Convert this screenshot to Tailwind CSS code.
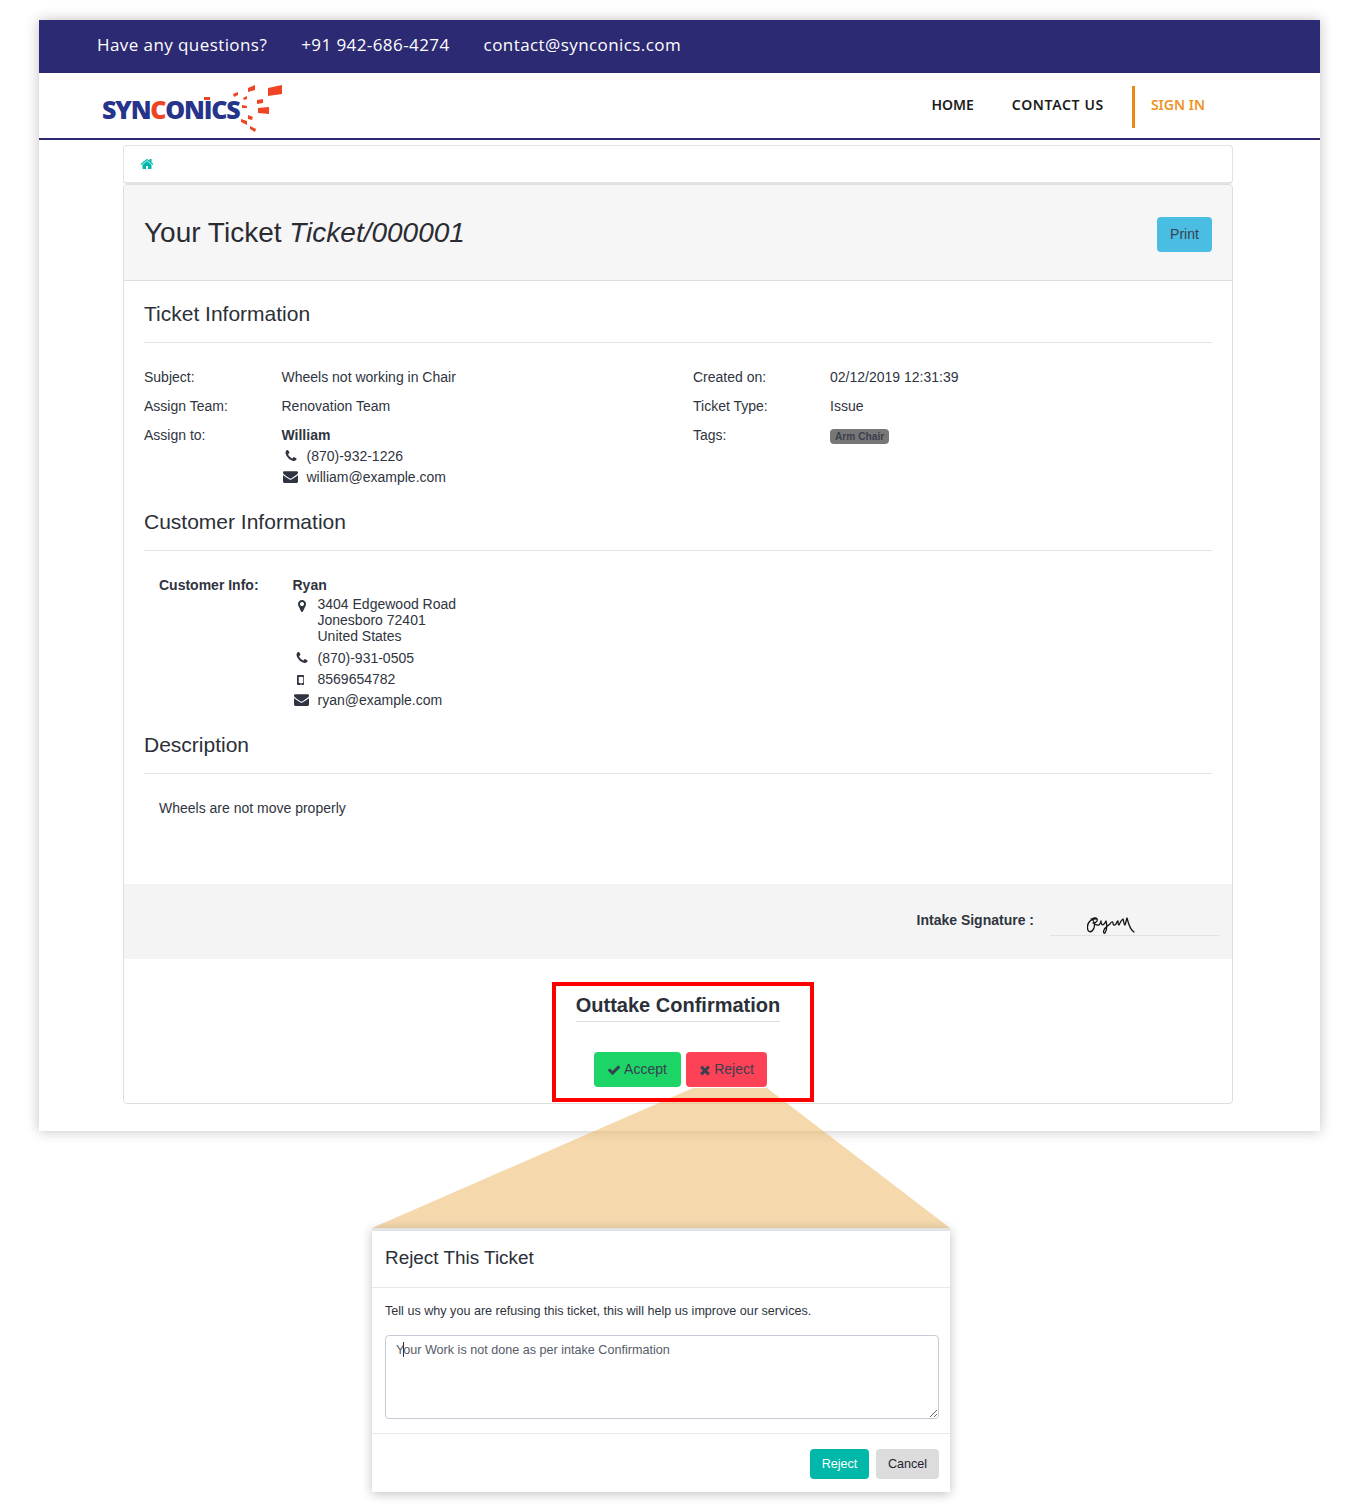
<!DOCTYPE html>
<html lang="en">
<head>
<meta charset="UTF-8">
<title>Ticket</title>
<script src="https://cdn.jsdelivr.net/npm/@tailwindcss/browser@4"></script>
</head>
<body class="bg-white">
<div class="relative w-[1368px] h-[1512px] overflow-hidden font-['Liberation_Sans',sans-serif] text-[14px] text-[#2f3440]">

  <!-- page window -->
  <div class="absolute left-[39px] top-[20px] w-[1281px] h-[1111px] bg-white shadow-[0_0_12px_rgba(60,40,40,0.3)]">
    <div class="h-[53px] bg-[#2c2a72] flex items-center pl-[58px] pb-[4px] gap-[34px] text-white text-[17px] font-['Open_Sans',sans-serif] tracking-[0.42px]">
      <span>Have any questions?</span>
      <span>+91 942-686-4274</span>
      <span>contact@synconics.com</span>
    </div>
    <div class="h-[67px] border-b-2 border-[#2c2a72] flex items-center justify-between">
      <div class="relative ml-[63px] w-[185px] h-[65px]">
        <span class="absolute left-0 top-[16px] text-[25px] leading-[40px] font-extrabold font-['Open_Sans',sans-serif] tracking-[-1.2px] text-[#27348b]">SYN<span class="text-[#ef4423]">C</span>ONICS</span>
        <svg class="absolute left-0 top-0" width="185" height="65" viewBox="0 0 185 65" fill="#ef4423">
          <polygon points="166,15 180,12 180,21 166,23"/>
          <polygon points="146,15 153,12 153,17 146,19"/>
          <polygon points="131,21 136,19 136,22 132,24"/>
          <polygon points="141,25 145,23 145,26 142,27"/>
          <polygon points="155,27 161,26 161,30 155,31"/>
          <polygon points="140,32 145,33 145,35 140,35"/>
          <polygon points="156,35 167,34 167,41 156,40"/>
          <polygon points="146,42 151,44 150,47 146,46"/>
          <polygon points="139,46 145,48 145,52 139,49"/>
          <polygon points="148,53 154,56 153,59 148,56"/>
          <rect x="102" y="24" width="6" height="3"/>
        </svg>
      </div>
      <nav class="flex items-center mr-[115px] font-['Noto_Sans',sans-serif] font-semibold text-[14px] text-[#1c1c1c]">
        <span class="mb-[2px]">HOME</span>
        <span class="ml-[38px] mb-[2px] tracking-[0.65px]">CONTACT US</span>
        <span class="ml-[28px] mt-[2px] h-[42px] border-l-[3px] border-[#e98a15] pl-[16px] leading-[38px] text-[#ee9426]">SIGN IN</span>
      </nav>
    </div>

    <div class="ml-[84px] mr-[87px] mt-[5px]">
      <div class="h-[39px] border border-[#e2e2e2] border-b-2 rounded-[4px] flex items-center pl-[16px] pb-[1px]">
        <svg class="text-[#00b8a9]" width="14" height="14" viewBox="0 0 1792 1792" fill="currentColor"><path d="M1472 992v480q0 26-19 45t-45 19h-384v-384h-256v384h-384q-26 0-45-19t-19-45v-480q0-1 .5-3t.5-3l575-474 575 474q1 2 1 6zm223-69l-62 74q-8 9-21 11h-3q-13 0-21-7l-692-577-692 577q-12 8-24 7-13-2-21-11l-62-74q-8-10-7-23.5t11-21.5l719-599q32-26 76-26t76 26l244 204v-195q0-14 9-23t23-9h192q14 0 23 9t9 23v408l219 182q10 8 11 21.5t-7 23.5z"/></svg>
      </div>

      <div class="h-[920px] border border-[#dedede] rounded-[4px] flex flex-col">
        <div class="h-[96px] shrink-0 bg-[#f6f6f6] border-b border-[#dedede] flex items-center justify-between px-[20px] rounded-t-[4px]">
          <h1 class="text-[28px] leading-[32px] text-[#2b2b33]">Your Ticket <em>Ticket/000001</em></h1>
          <button class="w-[55px] h-[35px] bg-[#4abde2] rounded-[4px] text-[14px] text-[#39404f] mt-[4px]">Print</button>
        </div>

        <div class="px-[20px]">
          <h2 class="h-[62px] border-b border-[#e4e4e4] text-[21px] leading-[66px] text-[#2b2f38]">Ticket Information</h2>
          <div class="flex mt-[20px] leading-[29px]">
            <div class="w-[549px] flex">
              <div class="w-[137.5px] shrink-0">
                <p>Subject:</p><p>Assign Team:</p><p>Assign to:</p>
              </div>
              <div>
                <p>Wheels not working in Chair</p>
                <p>Renovation Team</p>
                <p class="font-bold h-[25px]">William</p>
                <p class="flex items-center h-[21px] leading-[21px]">
                  <span class="w-[25px] flex justify-center pr-[7px] mb-[1px]"><svg width="14" height="14" viewBox="0 0 1792 1792" fill="currentColor"><path d="M1600 1240q0 27-10 70.5t-21 68.5q-21 50-122 106-94 51-186 51-27 0-53-3.5t-57.5-12.5-47-14.5-55.5-20.5-49-18q-98-35-175-83-127-79-264-216t-216-264q-48-77-83-175-3-9-18-49t-20.5-55.5-14.5-47-12.5-57.5-3.5-53q0-92 51-186 56-101 106-122 25-11 68.5-21t70.5-10q14 0 21 3 18 6 53 76 11 19 30 54t35 63.5 31 53.5q3 4 17.5 25t21.5 35.5 7 28.5q0 20-28.5 50t-62 55-62 53-28.5 46q0 9 5 22.5t8.5 20.5 14 24 11.5 19q76 137 174 235t235 174q2 1 19 11.5t24 14 20.5 8.5 22.5 5q18 0 46-28.5t53-62 55-62 50-28.5q14 0 28.5 7t35.5 21.5 25 17.5q25 15 53.5 31t63.5 35 54 30q70 35 76 53 3 7 3 21z"/></svg></span>(870)-932-1226</p>
                <p class="flex items-center h-[21px] leading-[21px]">
                  <span class="w-[25px] flex justify-center pr-[8px] mb-[2px]"><svg width="15" height="15" viewBox="0 0 1792 1792" fill="currentColor"><path d="M1792 710v794q0 66-47 113t-113 47h-1472q-66 0-113-47t-47-113v-794q44 49 101 87 362 246 497 345 57 42 92.5 65.5t94.5 48 110 24.5h2q51 0 110-24.5t94.5-48 92.5-65.5q170-123 498-345 57-39 100-87zm0-294q0 79-49 151t-122 123q-376 261-468 325-10 7-42.5 30.5t-54 38-52 32.5-57.5 27-50 9h-2q-23 0-50-9t-57.5-27-52-32.5-54-38-42.5-30.5q-91-64-262-182.5t-205-142.5q-62-42-117-115.5t-55-136.5q0-78 41.5-130t118.5-52h1472q65 0 112.5 47t47.5 113z"/></svg></span>william@example.com</p>
              </div>
            </div>
            <div class="flex">
              <div class="w-[137px] shrink-0">
                <p>Created on:</p><p>Ticket Type:</p><p>Tags:</p>
              </div>
              <div>
                <p>02/12/2019 12:31:39</p>
                <p>Issue</p>
                <p class="h-[29px] flex items-center"><span class="h-[15px] mt-[1px] px-[5px] rounded-[4px] bg-[#777777] text-[10.2px] leading-[15px] font-bold text-[#3a3f4c]">Arm Chair</span></p>
              </div>
            </div>
          </div>

          <h2 class="h-[62px] mt-[1px] border-b border-[#e4e4e4] text-[21px] leading-[66px] text-[#2b2f38]">Customer Information</h2>
          <div class="flex pl-[15px] mt-[24px]">
            <div class="w-[133.5px] font-bold leading-[21px]">Customer Info:</div>
            <div class="leading-[21px]">
              <p class="font-bold h-[21px]">Ryan</p>
              <div class="flex">
                <span class="w-[25px] pt-[3px] flex justify-center items-start pr-[7px]"><svg width="14" height="14" viewBox="0 0 1792 1792" fill="currentColor"><path d="M1152 640q0-106-75-181t-181-75-181 75-75 181 75 181 181 75 181-75 75-181zm256 0q0 109-33 179l-364 774q-16 33-47.5 52t-67.5 19-67.5-19-46.5-52l-365-774q-33-70-33-179 0-212 150-362t362-150 362 150 150 362z"/></svg></span>
                <p class="leading-[16px] mb-[4px]">3404 Edgewood Road<br>Jonesboro 72401<br>United States</p>
              </div>
              <p class="flex items-center h-[21px]">
                <span class="w-[25px] flex justify-center pr-[7px] mb-[1px]"><svg width="14" height="14" viewBox="0 0 1792 1792" fill="currentColor"><path d="M1600 1240q0 27-10 70.5t-21 68.5q-21 50-122 106-94 51-186 51-27 0-53-3.5t-57.5-12.5-47-14.5-55.5-20.5-49-18q-98-35-175-83-127-79-264-216t-216-264q-48-77-83-175-3-9-18-49t-20.5-55.5-14.5-47-12.5-57.5-3.5-53q0-92 51-186 56-101 106-122 25-11 68.5-21t70.5-10q14 0 21 3 18 6 53 76 11 19 30 54t35 63.5 31 53.5q3 4 17.5 25t21.5 35.5 7 28.5q0 20-28.5 50t-62 55-62 53-28.5 46q0 9 5 22.5t8.5 20.5 14 24 11.5 19q76 137 174 235t235 174q2 1 19 11.5t24 14 20.5 8.5 22.5 5q18 0 46-28.5t53-62 55-62 50-28.5q14 0 28.5 7t35.5 21.5 25 17.5q25 15 53.5 31t63.5 35 54 30q70 35 76 53 3 7 3 21z"/></svg></span>(870)-931-0505</p>
              <p class="flex items-center h-[21px]">
                <span class="w-[25px] flex justify-center pr-[8px]"><svg width="14" height="14" viewBox="0 0 1792 1792" fill="currentColor"><path d="M976 1408q0-33-23.5-56.5t-56.5-23.5-56.5 23.5-23.5 56.5 23.5 56.5 56.5 23.5 56.5-23.5 23.5-56.5zm208-160v-704q0-13-9.5-22.5t-22.5-9.5h-512q-13 0-22.5 9.5t-9.5 22.5v704q0 13 9.5 22.5t22.5 9.5h512q13 0 22.5-9.5t9.5-22.5zm-192-848q0-16-16-16h-160q-16 0-16 16t16 16h160q16 0 16-16zm288-16v1024q0 52-38 90t-90 38h-640q-52 0-90-38t-38-90v-1024q0-52 38-90t90-38h640q52 0 90 38t38 90z"/></svg></span>8569654782</p>
              <p class="flex items-center h-[21px]">
                <span class="w-[25px] flex justify-center pr-[8px] mb-[2px]"><svg width="15" height="15" viewBox="0 0 1792 1792" fill="currentColor"><path d="M1792 710v794q0 66-47 113t-113 47h-1472q-66 0-113-47t-47-113v-794q44 49 101 87 362 246 497 345 57 42 92.5 65.5t94.5 48 110 24.5h2q51 0 110-24.5t94.5-48 92.5-65.5q170-123 498-345 57-39 100-87zm0-294q0 79-49 151t-122 123q-376 261-468 325-10 7-42.5 30.5t-54 38-52 32.5-57.5 27-50 9h-2q-23 0-50-9t-57.5-27-52-32.5-54-38-42.5-30.5q-91-64-262-182.5t-205-142.5q-62-42-117-115.5t-55-136.5q0-78 41.5-130t118.5-52h1472q65 0 112.5 47t47.5 113z"/></svg></span>ryan@example.com</p>
            </div>
          </div>

          <h2 class="h-[62px] mt-[1px] border-b border-[#e4e4e4] text-[21px] leading-[66px] text-[#2b2f38]">Description</h2>
          <p class="pl-[15px] mt-[24px] leading-[21px] h-[86px]">Wheels are not move properly</p>
        </div>

        <div class="h-[75px] shrink-0 bg-[#f4f4f4] flex items-start justify-end pr-[13px]">
          <span class="font-bold mt-[26px] mr-[16px] leading-[20px]">Intake Signature :</span>
          <div class="w-[169px] h-[52px] border-b border-[#e2e2e2] flex justify-center">
            <svg class="mt-[33px] ml-[-47px]" width="48" height="18" viewBox="0 0 48 18" fill="none" stroke="#111111" stroke-width="1.3" stroke-linecap="round" stroke-linejoin="round"><path d="M10 2C4 1 0 6 .5 11 1 16 5 16 7 11 8 7 7 3 4 2M5 2C8 0 11 1 10 4 9 6 7 6 6 6 8 7 10 9 12 8 14 6 14 4 14 4 14 7 15 9 17 7 18 6 19 4 19 4 20 8 20 13 18 16 17 17 16 15 17 13 18 10 21 9 23 7 24 5 26 4 26 6 26 8 27 9 29 7 30 5 30 4 31 4 31 6 31 8 32 8 33 6 34 3 36 2 37 5 37 8 38 8 39 6 39 3 40 1 41 5 43 13 47 15"/></svg>
          </div>
        </div>

        <div class="flex flex-col items-center">
          <h3 class="mt-[31px] text-[20px] leading-[30px] font-bold h-[32px] border-b border-[#dcdcdc] text-[#2b2f38]">Outtake Confirmation</h3>
          <div class="mt-[30px] flex gap-[5px] ml-[4px]">
            <button class="h-[35px] w-[87px] rounded-[4px] bg-[#1cd566] flex items-center justify-center gap-[3px] text-[#39404f]"><svg width="14" height="14" viewBox="0 0 1792 1792" fill="currentColor"><path d="M1671 566q0 40-28 68l-724 724-136 136q-28 28-68 28t-68-28l-136-136-362-362q-28-28-28-68t28-68l136-136q28-28 68-28t68 28l294 295 656-657q28-28 68-28t68 28l136 136q28 28 28 68z"/></svg>Accept</button>
            <button class="h-[35px] w-[81px] rounded-[4px] bg-[#fd4257] flex items-center justify-center gap-[2px] text-[#39404f]"><svg width="14" height="14" viewBox="0 0 1792 1792" fill="currentColor"><path d="M1490 1322q0 40-28 68l-136 136q-28 28-68 28t-68-28l-294-294-294 294q-28 28-68 28t-68-28l-136-136q-28-28-28-68t28-68l294-294-294-294q-28-28-28-68t28-68l136-136q28-28 68-28t68 28l294 294 294-294q28-28 68-28t68 28l136 136q28 28 28 68t-28 68l-294 294 294 294q28 28 28 68z"/></svg>Reject</button>
          </div>
        </div>
      </div>
    </div>
  </div>

  <!-- callout wedge and highlight, laid over the page -->
  <svg class="absolute left-0 top-0 pointer-events-none" width="1368" height="1512"><polygon points="372,1228 693,1088 767,1088 950,1228" fill="#ebb35b" fill-opacity="0.5"/></svg>
  <div class="absolute left-[552px] top-[982px] w-[262px] h-[120px] border-4 border-[#ff0000]"></div>

  <!-- dialog -->
  <div class="absolute left-[372px] top-[1228px] w-[578px] h-[264px] bg-white border-t-[3px] border-[#e4e2e2] shadow-[0_2px_10px_rgba(60,40,40,0.3)] flex flex-col">
    <h4 class="h-[57px] shrink-0 border-b border-[#e8e8e8] pl-[13px] text-[18.9px] leading-[53px] text-[#2b2f38]">Reject This Ticket</h4>
    <div class="px-[13px] pr-[11px] h-[146px] shrink-0 border-b border-[#e8e8e8]">
      <p class="mt-[14px] text-[12.6px] leading-[18px]">Tell us why you are refusing this ticket, this will help us improve our services.</p>
      <div class="relative mt-[15px] h-[84px]">
        <textarea class="block w-full h-full border border-[#c5ccd6] rounded-[4px] px-[10px] py-[5px] text-[12.6px] leading-[18px] text-[#555b68] placeholder:text-[#555b68]" placeholder="Your Work is not done as per intake Confirmation"></textarea>
        <span class="absolute left-[18px] top-[7px] w-px h-[15px] bg-[#2f3440]"></span>
      </div>
    </div>
    <div class="flex justify-end gap-[7px] pr-[11px] pt-[15px]">
      <button class="w-[59px] h-[30px] rounded-[4px] bg-[#00b8a9] text-white text-[12.6px]">Reject</button>
      <button class="w-[63px] h-[30px] rounded-[4px] bg-[#dcdcdc] text-[#1f2330] text-[12.6px]">Cancel</button>
    </div>
  </div>
</div>
</body>
</html>
